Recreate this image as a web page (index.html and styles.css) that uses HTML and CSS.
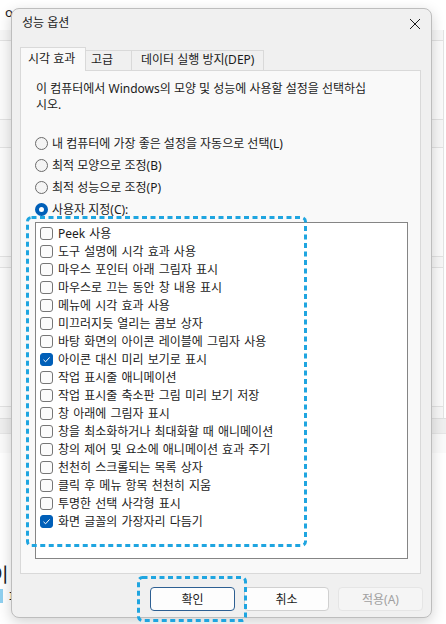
FILE: index.html
```html
<!DOCTYPE html>
<html lang="ko">
<head>
  <meta charset="UTF-8">
  <title>성능 옵션</title>
  <link rel="stylesheet" href="styles.css">
</head>
<body>
  <!-- 뒤에 있는 창 -->
  <div class="backdrop">
    <div class="bg-top"><span class="bg-letter">o</span></div>
    <div class="bg-area">
      <div class="bg-card card-a"></div>
      <div class="bg-card card-b"></div>
      <div class="bg-card card-c"></div>
    </div>
    <div class="bg-band"><div class="bg-field"></div></div>
    <div class="bg-title">이</div>
    <div class="bg-link">파</div>
  </div>

  <!-- 성능 옵션 대화 상자 -->
  <div class="dialog">
    <div class="titlebar">
      <span class="title">성능 옵션</span>
      <svg class="close" width="12" height="12" viewBox="0 0 12 12">
        <path d="M1 1 L11 11 M11 1 L1 11" stroke="#1b1b1b" stroke-width="1" fill="none"/>
      </svg>
    </div>

    <div class="tabs">
      <div class="tab tab-visual active">시각 효과</div>
      <div class="tab tab-advanced">고급</div>
      <div class="tab tab-dep">데이터 실행 방지(DEP)</div>
    </div>

    <div class="panel">
      <p class="intro">이 컴퓨터에서 Windows의 모양 및 성능에 사용할 설정을 선택하십<br>시오.</p>

      <div class="radios">
        <div class="radio-row"><span class="radio"></span>내 컴퓨터에 가장 좋은 설정을 자동으로 선택(L)</div>
        <div class="radio-row"><span class="radio"></span>최적 모양으로 조정(B)</div>
        <div class="radio-row"><span class="radio"></span>최적 성능으로 조정(P)</div>
        <div class="radio-row"><span class="radio checked"></span>사용자 지정(C):</div>
      </div>

      <div class="listbox">
        <div class="check-row"><span class="check"></span>Peek 사용</div>
        <div class="check-row"><span class="check"></span>도구 설명에 시각 효과 사용</div>
        <div class="check-row"><span class="check"></span>마우스 포인터 아래 그림자 표시</div>
        <div class="check-row"><span class="check"></span>마우스로 끄는 동안 창 내용 표시</div>
        <div class="check-row"><span class="check"></span>메뉴에 시각 효과 사용</div>
        <div class="check-row"><span class="check"></span>미끄러지듯 열리는 콤보 상자</div>
        <div class="check-row"><span class="check"></span>바탕 화면의 아이콘 레이블에 그림자 사용</div>
        <div class="check-row"><span class="check checked"><svg width="9" height="9" viewBox="0 0 9 9"><path d="M1.5 4.8 L3.6 6.8 L7.6 2.4" stroke="#fff" stroke-width="1" fill="none"/></svg></span>아이콘 대신 미리 보기로 표시</div>
        <div class="check-row"><span class="check"></span>작업 표시줄 애니메이션</div>
        <div class="check-row"><span class="check"></span>작업 표시줄 축소판 그림 미리 보기 저장</div>
        <div class="check-row"><span class="check"></span>창 아래에 그림자 표시</div>
        <div class="check-row"><span class="check"></span>창을 최소화하거나 최대화할 때 애니메이션</div>
        <div class="check-row"><span class="check"></span>창의 제어 및 요소에 애니메이션 효과 주기</div>
        <div class="check-row"><span class="check"></span>천천히 스크롤되는 목록 상자</div>
        <div class="check-row"><span class="check"></span>클릭 후 메뉴 항목 천천히 지움</div>
        <div class="check-row"><span class="check"></span>투명한 선택 사각형 표시</div>
        <div class="check-row"><span class="check checked"><svg width="9" height="9" viewBox="0 0 9 9"><path d="M1.5 4.8 L3.6 6.8 L7.6 2.4" stroke="#fff" stroke-width="1" fill="none"/></svg></span>화면 글꼴의 가장자리 다듬기</div>
      </div>
    </div>

    <div class="buttons">
      <button class="btn default">확인</button>
      <button class="btn">취소</button>
      <button class="btn" disabled>적용(A)</button>
    </div>
  </div>

  <!-- 포커스 표시 -->
  <svg class="focus focus-list" width="284" height="334" viewBox="0 0 284 334">
    <rect x="2.5" y="2.5" width="278" height="328" rx="4" fill="none" stroke="#1fa5e0" stroke-width="3" stroke-dasharray="5 3.5"/>
  </svg>
  <svg class="focus focus-ok" width="114" height="50" viewBox="0 0 114 50">
    <rect x="2.5" y="2.5" width="107" height="43" rx="4" fill="none" stroke="#1fa5e0" stroke-width="3" stroke-dasharray="5 3.5"/>
  </svg>
</body>
</html>
```

FILE: styles.css
```css
/* 기본 설정 */
* {
  box-sizing: border-box;
}
body {
  margin: 0;
  width: 446px;
  height: 624px;
  position: relative;
  overflow: hidden;
  background: #ffffff;
  font-family: "Noto Sans", "Noto Sans CJK KR", sans-serif;
  font-size: 12px;
  color: #1b1b1b;
}

/* 뒤에 있는 창 */
.backdrop {
  width: 446px;
  height: 624px;
}
.bg-top {
  height: 30px;
  padding: 4px 0 0 5px;
  line-height: 16px;
}
.bg-letter {
  font-size: 13px;
}
.bg-area {
  height: 388px;
  background: #f7f7f7;
  border-right: 1px solid #e3e3e3;
  width: 444px;
  padding-top: 10px;
}
.bg-card {
  background: #fbfbfb;
  border-top: 1px solid #e2e2e2;
  border-bottom: 1px solid #e2e2e2;
}
.card-a {
  height: 80px;
}
.card-b {
  height: 110px;
  margin-top: 27px;
}
.card-c {
  height: 140px;
  margin-top: 10px;
}
.bg-band {
  height: 35px;
  background: #efefef;
  border-top: 1px solid #e0e0e0;
  border-bottom: 1px solid #e0e0e0;
  padding-top: 14px;
}
.bg-field {
  height: 20px;
  background: #fafafa;
  border-top: 1px solid #e6e6e6;
}
.bg-title {
  margin-top: 110px;
  margin-left: -9px;
  font-size: 19px;
  line-height: 24px;
}
.bg-link {
  margin-top: 2px;
  padding-left: 6px;
  border-left: 3px solid #8fd0f0;
  font-size: 13px;
  line-height: 14px;
}

/* 대화 상자 */
.dialog {
  position: absolute;
  left: 11px;
  top: 8px;
  width: 421px;
  height: 610px;
  background: #f0f0f0;
  border: 1px solid #bdbdbd;
  border-radius: 8px;
  box-shadow: 0 4px 14px rgba(0, 0, 0, 0.18);
}
.titlebar {
  height: 38px;
  display: flex;
  justify-content: space-between;
  align-items: flex-start;
  padding: 6px 10px 0 10px;
  line-height: 16px;
}
.close {
  margin-top: 3px;
}

/* 탭 */
.tabs {
  display: flex;
  align-items: flex-end;
  margin-left: 8px;
  height: 23px;
}
.tab {
  height: 20px;
  line-height: 18px;
  border: 1px solid #d9d9d9;
  border-bottom: none;
  background: #f0f0f0;
}
.tab-visual {
  width: 66px;
  padding-left: 7px;
}
.tab-advanced {
  width: 46px;
  padding-left: 5px;
  border-left: none;
}
.tab-dep {
  width: 132px;
  padding-left: 9px;
  border-left: none;
}
.tab.active {
  height: 24px;
  line-height: 22px;
  background: #f9f9f9;
  position: relative;
  z-index: 1;
  margin-bottom: -1px;
}

/* 내용 영역 */
.panel {
  margin-left: 8px;
  width: 401px;
  height: 504px;
  background: #f9f9f9;
  border: 1px solid #d9d9d9;
  padding: 10px 12px 0 14px;
}
.intro {
  margin: 0;
  padding-left: 1px;
  line-height: 16px;
}
.radios {
  margin-top: 19px;
}
.radio-row {
  height: 22px;
  display: flex;
  align-items: center;
  gap: 4px;
}
.radio {
  width: 13px;
  height: 13px;
  border-radius: 50%;
  border: 1px solid #6b6b6b;
  background: #f4f4f4;
}
.radio.checked {
  border: 4px solid #005fb8;
  background: #ffffff;
}

/* 목록 상자 */
.listbox {
  margin-top: 2px;
  height: 337px;
  background: #ffffff;
  border: 1px solid #858585;
  padding: 1px 0 0 4px;
}
.check-row {
  height: 18px;
  display: flex;
  align-items: center;
  gap: 5px;
  word-spacing: 1px;
}
.check {
  width: 13px;
  height: 13px;
  border: 1px solid #767676;
  border-radius: 3px;
  background: #fbfbfb;
  display: flex;
  align-items: center;
  justify-content: center;
}
.check.checked {
  background: #005fb8;
  border-color: #005fb8;
}

/* 버튼 */
.buttons {
  display: flex;
  justify-content: flex-end;
  gap: 9px;
  padding-right: 8px;
  margin-top: 13px;
}
.btn {
  width: 85px;
  height: 24px;
  font-family: inherit;
  font-size: 12px;
  color: #1b1b1b;
  background: #fdfdfd;
  border: 1px solid #d0d0d0;
  border-radius: 4px;
  padding: 0;
}
.btn.default {
  border-color: #2d5f92;
}
.btn:disabled {
  background: #f5f5f5;
  border-color: #e5e5e5;
  color: #a0a0a0;
}

/* 포커스 표시 */
.focus {
  position: absolute;
}
.focus-list {
  left: 25px;
  top: 215px;
}
.focus-ok {
  left: 136px;
  top: 575px;
}
```
